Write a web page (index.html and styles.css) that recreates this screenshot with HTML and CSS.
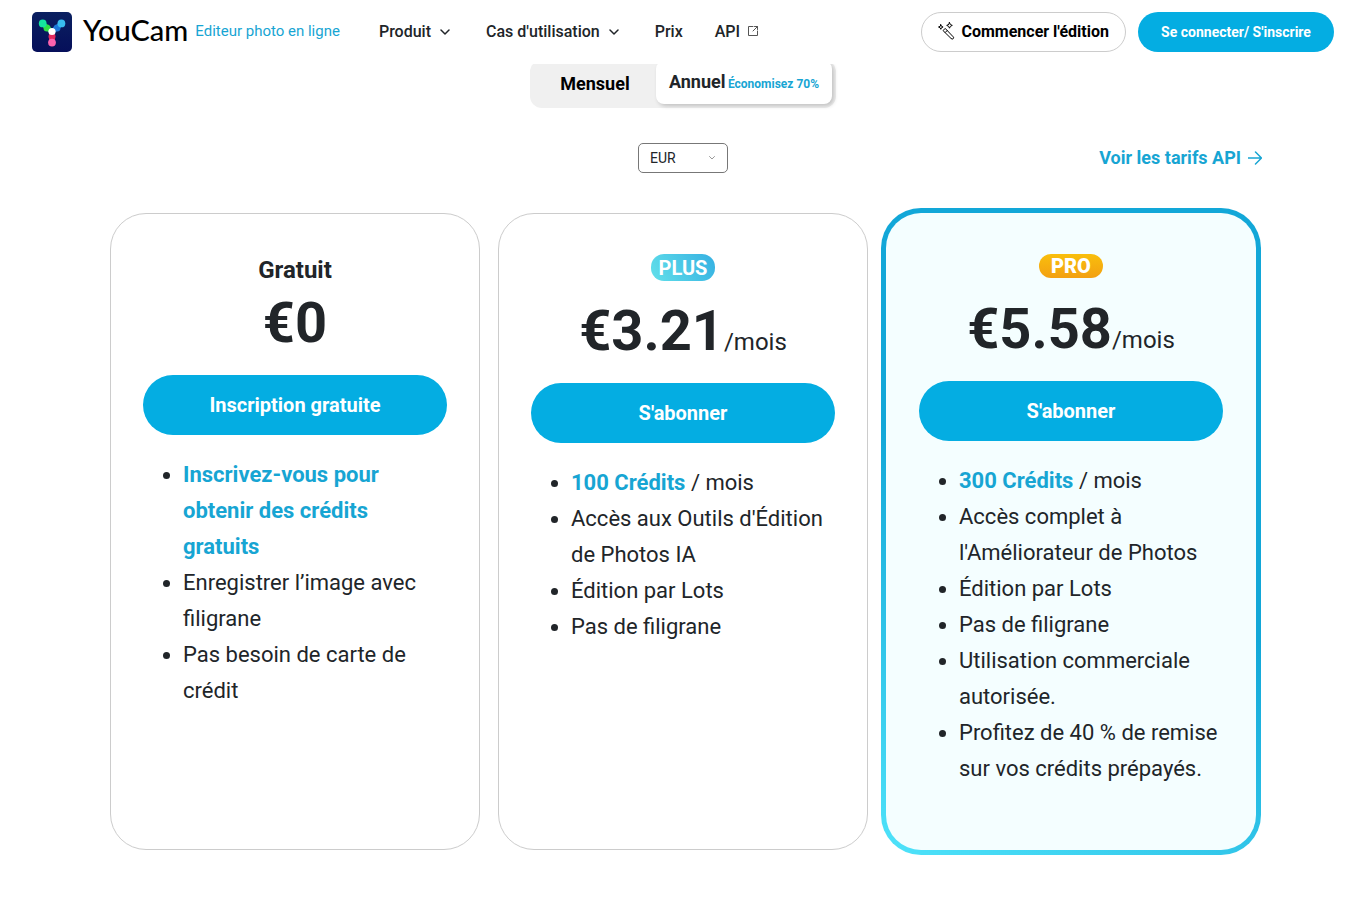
FILE: index.html
```html
<!DOCTYPE html>
<html lang="fr">
<head>
<meta charset="utf-8">
<meta name="viewport" content="width=device-width, initial-scale=1">
<title>YouCam – Prix</title>
<link rel="stylesheet" href="styles.css">
</head>
<body>
<header class="header">
  <a class="brand" href="#">
    <svg class="brand-icon" viewBox="0 0 40 40" aria-hidden="true">
      <defs>
        <linearGradient id="bg" x1="0" y1="0" x2="0" y2="1"><stop offset="0" stop-color="#0a2060"/><stop offset="1" stop-color="#060f5a"/></linearGradient>
      </defs>
      <rect width="40" height="40" rx="5" fill="url(#bg)"/>
      <path d="M11 12L20 20" stroke="#22d458" stroke-width="5"/>
      <path d="M29 12L20 20" stroke="#2590dc" stroke-width="5"/>
      <path d="M20 20V30" stroke="#c8285e" stroke-width="6"/>
      <circle cx="15" cy="16" r="3.500" fill="#2fe046"/>
      <circle cx="25" cy="16" r="3.500" fill="#1c78d8"/>
      <circle cx="20" cy="24.500" r="3.500" fill="#e02a60"/>
      <circle cx="10.700" cy="11.400" r="3.900" fill="#14e6a0"/>
      <circle cx="29.400" cy="11.400" r="3.900" fill="#38bdf0"/>
      <circle cx="20" cy="30.600" r="3.900" fill="#fb62ae"/>
      <circle cx="20" cy="19.500" r="3.600" fill="#fff"/>
    </svg>
    <span class="brand-name">YouCam</span>
    <span class="brand-tag">Editeur photo en ligne</span>
  </a>
  <nav class="nav">
    <a href="#">Produit <svg class="chevron" viewBox="0 0 10 10" aria-hidden="true"><path d="M1 4l4 4 4-4"/></svg></a>
    <a href="#">Cas d'utilisation <svg class="chevron" viewBox="0 0 10 10" aria-hidden="true"><path d="M1 4l4 4 4-4"/></svg></a>
    <a class="nav-short" href="#">Prix</a>
    <a class="nav-api" href="#">API <svg class="external" viewBox="0 0 10 10" aria-hidden="true"><path d="M5 .5H.5v9h9V5M6.500 .5h3v3M9.500 .5L5 5"/></svg></a>
  </nav>
  <div class="actions">
    <button class="pill pill-outline" type="button">
      <svg class="wand" viewBox="0 0 18 18" aria-hidden="true"><path d="M6.300 8.300l1.900-1.900 8 8.400a1.300 1.300 0 0 1-1.900 1.900zM8.300 10.400l1.900-1.900"/><path d="M12.500 .6l.9 1.900 1.900.9-1.900.9-.9 1.900-.9-1.900-1.900-.9 1.900-.9zM3.800 2.700l.7 1.600 1.600.7-1.600.7-.7 1.600-.7-1.600L1.500 5l1.600-.7z"/></svg>
      Commencer l'édition
    </button>
    <button class="pill pill-solid" type="button">Se connecter/ S'inscrire</button>
  </div>
</header>

<main class="pricing">
  <div class="period" role="group" aria-label="Période">
    <button class="period-option" type="button">Mensuel</button>
    <button class="period-option period-active" type="button" aria-pressed="true">Annuel <small>Économisez 70%</small></button>
  </div>

  <div class="toolbar">
    <div class="currency">
      <select class="currency-select" aria-label="Devise">
        <option>EUR</option>
        <option>USD</option>
      </select>
      <svg class="currency-arrow" viewBox="0 0 6 6" aria-hidden="true"><path d="M.5 1.500L3 4l2.500-2.500"/></svg>
    </div>
    <a class="api-link" href="#">Voir les tarifs API <svg class="arrow" viewBox="0 0 14 14" aria-hidden="true"><path d="M0 7h13M7.500 1l6 6-6 6"/></svg></a>
  </div>

  <div class="plans">
    <section class="plan">
      <h2 class="plan-title">Gratuit</h2>
      <p class="price"><strong>€0</strong></p>
      <button class="cta" type="button">Inscription gratuite</button>
      <ul class="features">
        <li><b>Inscrivez-vous pour obtenir des crédits gratuits</b></li>
        <li>Enregistrer l’image avec filigrane</li>
        <li>Pas besoin de carte de crédit</li>
      </ul>
    </section>
    <section class="plan">
      <h2 class="badge badge-plus">PLUS</h2>
      <p class="price"><strong>€3.21</strong><span>/mois</span></p>
      <button class="cta" type="button">S'abonner</button>
      <ul class="features">
        <li><b>100 Crédits</b> / mois</li>
        <li>Accès aux Outils d'Édition de Photos IA</li>
        <li>Édition par Lots</li>
        <li>Pas de filigrane</li>
      </ul>
    </section>
    <section class="plan plan-pro">
      <h2 class="badge badge-pro">PRO</h2>
      <p class="price"><strong>€5.58</strong><span>/mois</span></p>
      <button class="cta" type="button">S'abonner</button>
      <ul class="features">
        <li><b>300 Crédits</b> / mois</li>
        <li>Accès complet à l'Améliorateur de Photos</li>
        <li>Édition par Lots</li>
        <li>Pas de filigrane</li>
        <li>Utilisation commerciale autorisée.</li>
        <li>Profitez de 40 % de remise sur vos crédits prépayés.</li>
      </ul>
    </section>
  </div>
</main>
</body>
</html>
```
FILE: styles.css
```css
* { box-sizing: border-box; }

body {
  margin: 0;
  background: #fff;
  color: #212529;
  font-family: Roboto, "Liberation Sans", sans-serif;
}

a { color: inherit; text-decoration: none; }
button { border: 0; font-family: inherit; cursor: pointer; }
svg { fill: none; stroke-linecap: round; stroke-linejoin: round; flex: none; }

/* Header */
.header {
  position: sticky;
  top: 0;
  z-index: 10;
  display: flex;
  align-items: center;
  height: 64px;
  padding: 0 32px;
  background: #fff;
}
.brand { display: flex; align-items: center; }
.brand-icon { width: 40px; height: 40px; }
.brand-name {
  margin-left: 11px;
  padding-bottom: 4px;
  color: #000;
  font: 500 29px/40px Lato, sans-serif;
}
.brand-tag {
  margin-left: 7px;
  padding-bottom: 2px;
  color: #17a5d3;
  font-size: 15px;
  white-space: nowrap;
}

.nav {
  display: flex;
  align-items: center;
  gap: 36px;
  margin-left: 39px;
  padding-bottom: 2px;
  font-size: 16px;
  font-weight: 500;
  white-space: nowrap;
}
.nav a { display: flex; align-items: center; gap: 9px; }
.nav .nav-api { gap: 8px; margin-left: -4px; }
.chevron { width: 10px; height: 10px; stroke: #212529; stroke-width: 1.500; }
.external { width: 10px; height: 10px; stroke: #555; stroke-width: 1; }

.actions { display: flex; gap: 12px; margin-left: auto; }
.pill {
  display: flex;
  align-items: center;
  justify-content: center;
  height: 40px;
  border-radius: 20px;
  font-weight: 700;
  white-space: nowrap;
}
.pill-outline {
  gap: 6px;
  padding: 0 16px 2px 15px;
  border: 1px solid #ccc;
  background: #fff;
  color: #000;
  font-size: 16px;
}
.wand { width: 18px; height: 18px; stroke: #000; stroke-width: 1; }
.pill-solid { width: 196px; background: #04ade2; color: #fff; font-size: 14px; }

/* Pricing */
.pricing {
  max-width: 1146px;
  margin: -4px auto 0;
  padding-bottom: 45px;
}
.period {
  display: flex;
  width: 306px;
  height: 48px;
  margin: 0 auto;
  padding: 1px 4px 4px 0;
  border-radius: 12px;
  background: #f0f0f0;
}
.period-option {
  flex: 1;
  padding: 1px 0 0 4px;
  background: none;
  color: #000;
  font-size: 18px;
  font-weight: 700;
}
.period-active {
  flex: 0 0 176px;
  padding: 0 0 2px;
  border-radius: 8px;
  background: #fff;
  box-shadow: 2px 2px 4px rgba(0, 0, 0, .2);
  color: #212529;
}
.period-active small { margin-left: -2px; color: #17a5d3; font-size: 12px; }

.toolbar {
  display: grid;
  grid-template-columns: 1fr auto 1fr;
  align-items: center;
  margin: 35px 0 40px;
}
.currency { position: relative; grid-column: 2; width: 90px; }
.currency-select {
  appearance: none;
  display: block;
  width: 100%;
  height: 30px;
  padding: 0 11px;
  border: 1px solid #777;
  border-radius: 5px;
  background: #fff;
  color: #212529;
  font-family: inherit;
  font-size: 14px;
}
.currency-arrow {
  position: absolute;
  top: 12px;
  right: 13px;
  width: 6px;
  height: 6px;
  stroke: #999;
  pointer-events: none;
}
.api-link {
  display: flex;
  align-items: center;
  justify-self: end;
  gap: 7px;
  margin-right: -6px;
  padding-bottom: 1px;
  color: #17a5d3;
  font-size: 18px;
  font-weight: 700;
}
.arrow { width: 14px; height: 14px; stroke: #17a5d3; stroke-width: 1.500; }

.plans {
  display: grid;
  grid-template-columns: repeat(auto-fit, minmax(320px, 1fr));
  gap: 18px;
}
.plan {
  display: flex;
  flex-direction: column;
  align-items: center;
  padding: 40px 32px;
  border: 1px solid #ccc;
  border-radius: 36px;
}
.plan-pro {
  margin: -5px;
  padding: 41px 33px 63px;
  border: 5px solid transparent;
  border-radius: 40px;
  background:
    linear-gradient(#f4feff, #f4feff) padding-box,
    linear-gradient(30deg, #4fe3fa 0%, #12a7d8 50%, #12a7d8 100%) border-box;
}
.plan-title { margin: 0; font-size: 24px; font-weight: 700; line-height: 33px; }
.badge {
  width: 64px;
  margin: 0 0 15px;
  border-radius: 13px;
  color: #fff;
  font-size: 20px;
  font-weight: 700;
  line-height: 26px;
  text-align: center;
}
.badge-plus { padding-top: 1px; margin-bottom: 14px; background: linear-gradient(60deg, #62e0ea, #35b0e2); }
.badge-pro { background: linear-gradient(#f9bf0c, #f3a012); line-height: 24px; font-weight: 900; }
.price {
  display: flex;
  align-items: baseline;
  height: 72px;
  margin: 0 0 16px;
  font-size: 24px;
  line-height: 72px;
  white-space: nowrap;
}
.price strong { font-size: 56px; font-weight: 700; }
.cta {
  width: 100%;
  height: 60px;
  border-radius: 30px;
  background: #04ade2;
  color: #fff;
  font-size: 20px;
  font-weight: 700;
}
.features {
  align-self: stretch;
  margin: 22px 0 0;
  padding-left: 40px;
  font-size: 22px;
  line-height: 36px;
}
.features b { color: #17a5d3; font-weight: 700; }
```
